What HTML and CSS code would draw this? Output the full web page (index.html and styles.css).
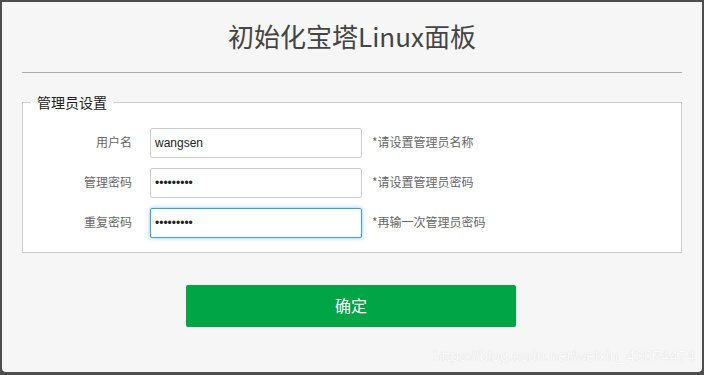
FILE: index.html
```html
<!DOCTYPE html>
<html lang="zh-CN">
<head>
<meta charset="utf-8">
<title>初始化宝塔Linux面板</title>
<link rel="stylesheet" href="styles.css">
</head>
<body>
<div class="dialog">
  <h1 class="title">初始化宝塔Linux面板</h1>
  <hr class="divider">
  <form class="setup" onsubmit="return false">
    <fieldset class="group">
      <legend class="group-title">管理员设置</legend>
      <div class="row">
        <label class="row-label" for="user">用户名</label>
        <input class="field" id="user" type="text" value="wangsen">
        <span class="hint">*请设置管理员名称</span>
      </div>
      <div class="row">
        <label class="row-label" for="pwd">管理密码</label>
        <input class="field" id="pwd" type="password" value="123456789">
        <span class="hint">*请设置管理员密码</span>
      </div>
      <div class="row">
        <label class="row-label" for="pwd2">重复密码</label>
        <input class="field field-active" id="pwd2" type="password" value="123456789" autofocus>
        <span class="hint">*再输一次管理员密码</span>
      </div>
    </fieldset>
    <div class="actions">
      <button class="btn-submit" type="submit">确定</button>
    </div>
  </form>
  <div class="watermark">https://blog.csdn.net/weixin_43074474</div>
</div>
</body>
</html>
```

FILE: styles.css
```css
html, body {
  margin: 0;
  padding: 0;
}

body {
  background: #4e4e4e;
  width: 704px;
  height: 375px;
  overflow: hidden;
  font-family: "Noto Sans CJK SC", "Liberation Sans", sans-serif;
}

.dialog {
  position: relative;
  margin: 2px 2px 0 2px;
  height: 370px;
  background: #f6f6f6;
  border-radius: 0 0 4px 4px;
  overflow: hidden;
}

.title {
  margin: 0;
  height: 70px;
  line-height: 68px;
  text-align: center;
  font-size: 26px;
  font-weight: normal;
  color: #444;
}

.divider {
  margin: 0 20px;
  border: 0;
  height: 1px;
  background: #acacac;
}

.setup {
  margin: 0;
  padding: 0;
}

.group {
  margin: 19px 20px 0 20px;
  padding: 15px 0 14px 0;
  border: 1px solid #cccccc;
  background: #fff;
  min-width: 0;
}

.group-title {
  margin-left: 8px;
  padding: 0 6px 1px 6px;
  font-size: 14px;
  line-height: 20px;
  color: #222;
}

.row {
  display: flex;
  align-items: center;
  height: 30px;
  margin-bottom: 10px;
}

.row:last-child {
  margin-bottom: 0;
}

.row-label {
  width: 109px;
  margin-right: 18px;
  padding-bottom: 3px;
  text-align: right;
  font-size: 12px;
  color: #666;
}

.field {
  box-sizing: border-box;
  width: 212px;
  height: 30px;
  margin: 0;
  padding: 0 4px;
  border: 1px solid #cccccc;
  border-radius: 2px;
  background: #fff;
  font-family: "Liberation Sans", Arial, sans-serif;
  font-size: 12px;
  color: #222;
  outline: none;
}

.field-active {
  border-color: #3ca0f0;
  box-shadow: 0 0 4px rgba(60, 160, 240, 0.6);
}

.hint {
  margin-left: 10px;
  padding-bottom: 3px;
  font-size: 12px;
  color: #666;
}

.actions {
  display: flex;
  justify-content: center;
  margin-top: 32px;
}

.btn-submit {
  width: 330px;
  height: 42px;
  margin: 0;
  margin-right: 2px;
  padding: 0 0 3px 0;
  border: 0;
  border-radius: 2px;
  background: #00a546;
  color: #fff;
  font-family: "Noto Sans CJK SC", sans-serif;
  font-size: 16px;
  cursor: pointer;
}

.watermark {
  position: absolute;
  right: 7px;
  bottom: 7px;
  font-family: "Liberation Sans", Arial, sans-serif;
  font-size: 15.4px;
  line-height: 18px;
  color: #fcfcfc;
  text-shadow: 0 0 1px #cfcfcf;
  white-space: nowrap;
}
```
